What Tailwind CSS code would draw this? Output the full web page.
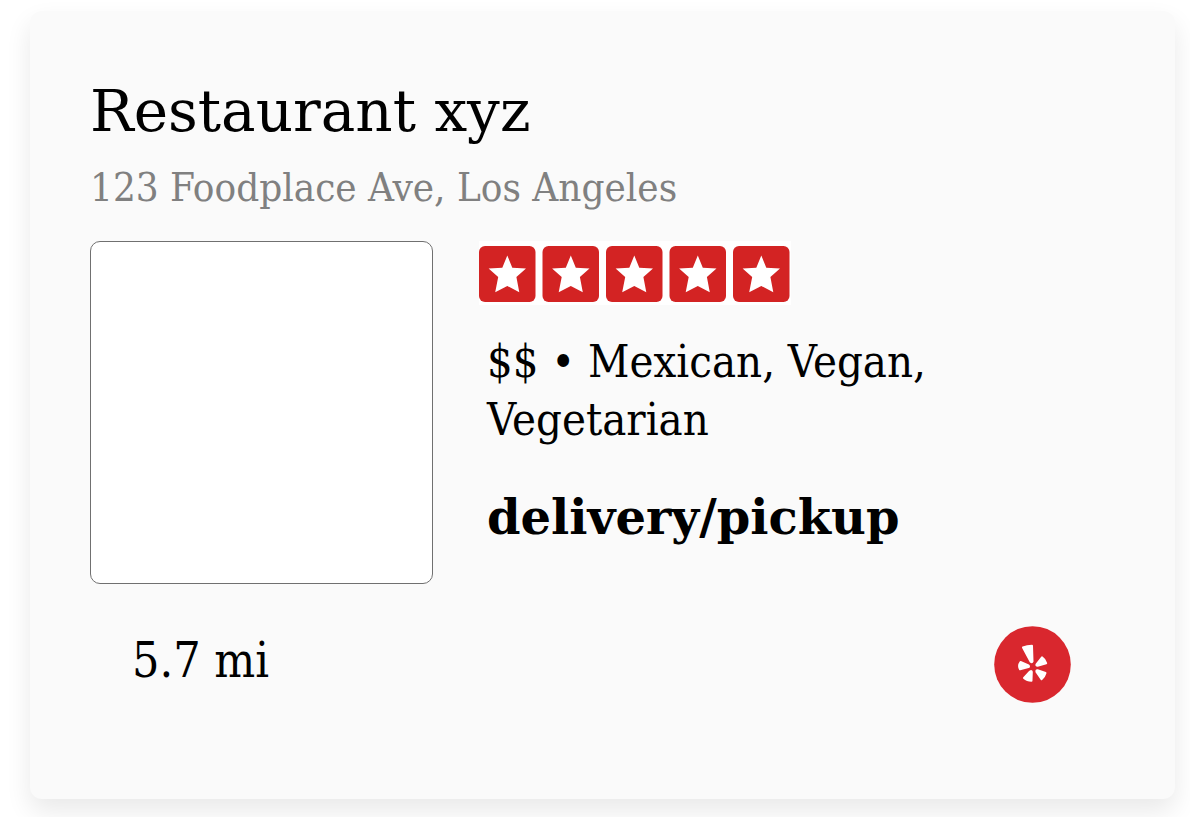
<!DOCTYPE html>
<html lang="en">
<head>
<meta charset="utf-8">
<meta name="viewport" content="width=device-width, initial-scale=1">
<title>Restaurant xyz</title>
<script src="https://cdn.jsdelivr.net/npm/@tailwindcss/browser@4"></script>
</head>
<body class="bg-white pt-[11px] pr-[15px] pb-[18px] pl-[30px] font-['DejaVu_Serif',serif] text-black">
<article class="rounded-xl bg-[#fafafa] px-[60px] pt-[64px] pb-24 shadow-[0_12px_26px_rgba(0,0,0,0.09)]">
  <h1 class="text-[58px] leading-[72px]">Restaurant xyz</h1>
  <p class="mt-4 text-[40px] leading-[48px] text-[#808080] font-['DejaVu_Serif_Condensed','DejaVu_Serif',serif]">123 Foodplace Ave, Los Angeles</p>
  <div class="mt-[30px] flex gap-[46px]">
    <div class="size-[343px] shrink-0 rounded-[10px] border border-[#707070] bg-white"></div>
    <div class="min-w-0">
      <svg class="block h-[64px] w-[312px]" viewBox="0 0 312 64" role="img" aria-label="5 out of 5 stars">
        <defs>
          <g id="star">
            <rect y="5" width="56.5" height="56" rx="6" fill="#d32323"/>
            <path d="M28.3 14.5 33.3 26.7 47 27.5 37.4 36 40.3 51.2 28.3 45 16.2 51.2 19.2 36 9.6 27.5 23.3 26.7Z" fill="#fff"/>
          </g>
        </defs>
        <rect width="312" height="64" fill="#fff"/>
        <use href="#star"/>
        <use href="#star" x="63.5"/>
        <use href="#star" x="127"/>
        <use href="#star" x="190.5"/>
        <use href="#star" x="254"/>
      </svg>
      <p class="mt-7 max-w-[480px] pl-2 text-[45px] leading-[58px] font-['DejaVu_Serif_Condensed','DejaVu_Serif',serif]">$$ • Mexican, Vegan, Vegetarian</p>
      <p class="mt-9 pl-2 text-[48px] leading-[64px] font-bold">delivery/pickup</p>
    </div>
  </div>
  <div class="mt-[42px] flex items-start justify-between pr-[44px] pl-[42px]">
    <p class="-mb-1 text-[48px] leading-[68px] font-['DejaVu_Serif_Condensed','DejaVu_Serif',serif]">5.7 mi</p>
    <a href="#" aria-label="View on Yelp">
      <svg class="block size-[77px]" viewBox="0 0 77 77" aria-hidden="true">
        <circle cx="38.5" cy="38.5" r="38.3" fill="#d9272e"/>
        <g fill="#fff" stroke="#fff" stroke-width="2" stroke-linejoin="round">
          <path d="M29 21.500Q33 19.800 38 19.800L38.500 35.500Q38 37 36.500 35.500Z"/>
          <path d="M26.500 36 34.500 39.500Q35.500 40.500 34.500 41L26 43.200Q24 39.500 26.500 36Z"/>
          <path d="M30 52 36 45.500Q37.800 44.500 37.800 46L37.500 54.800Q33 54.800 30 52Z"/>
          <path d="M43.500 44.200 51.500 47Q50.500 50.800 47.500 53.300L42.500 46Q42 44 43.500 44.200Z"/>
          <path d="M42.500 38.300 48 31.300Q51.300 33.500 52.200 37.300L43.500 39.800Q42 39.800 42.500 38.300Z"/>
        </g>
      </svg>
    </a>
  </div>
</article>
</body>
</html>
